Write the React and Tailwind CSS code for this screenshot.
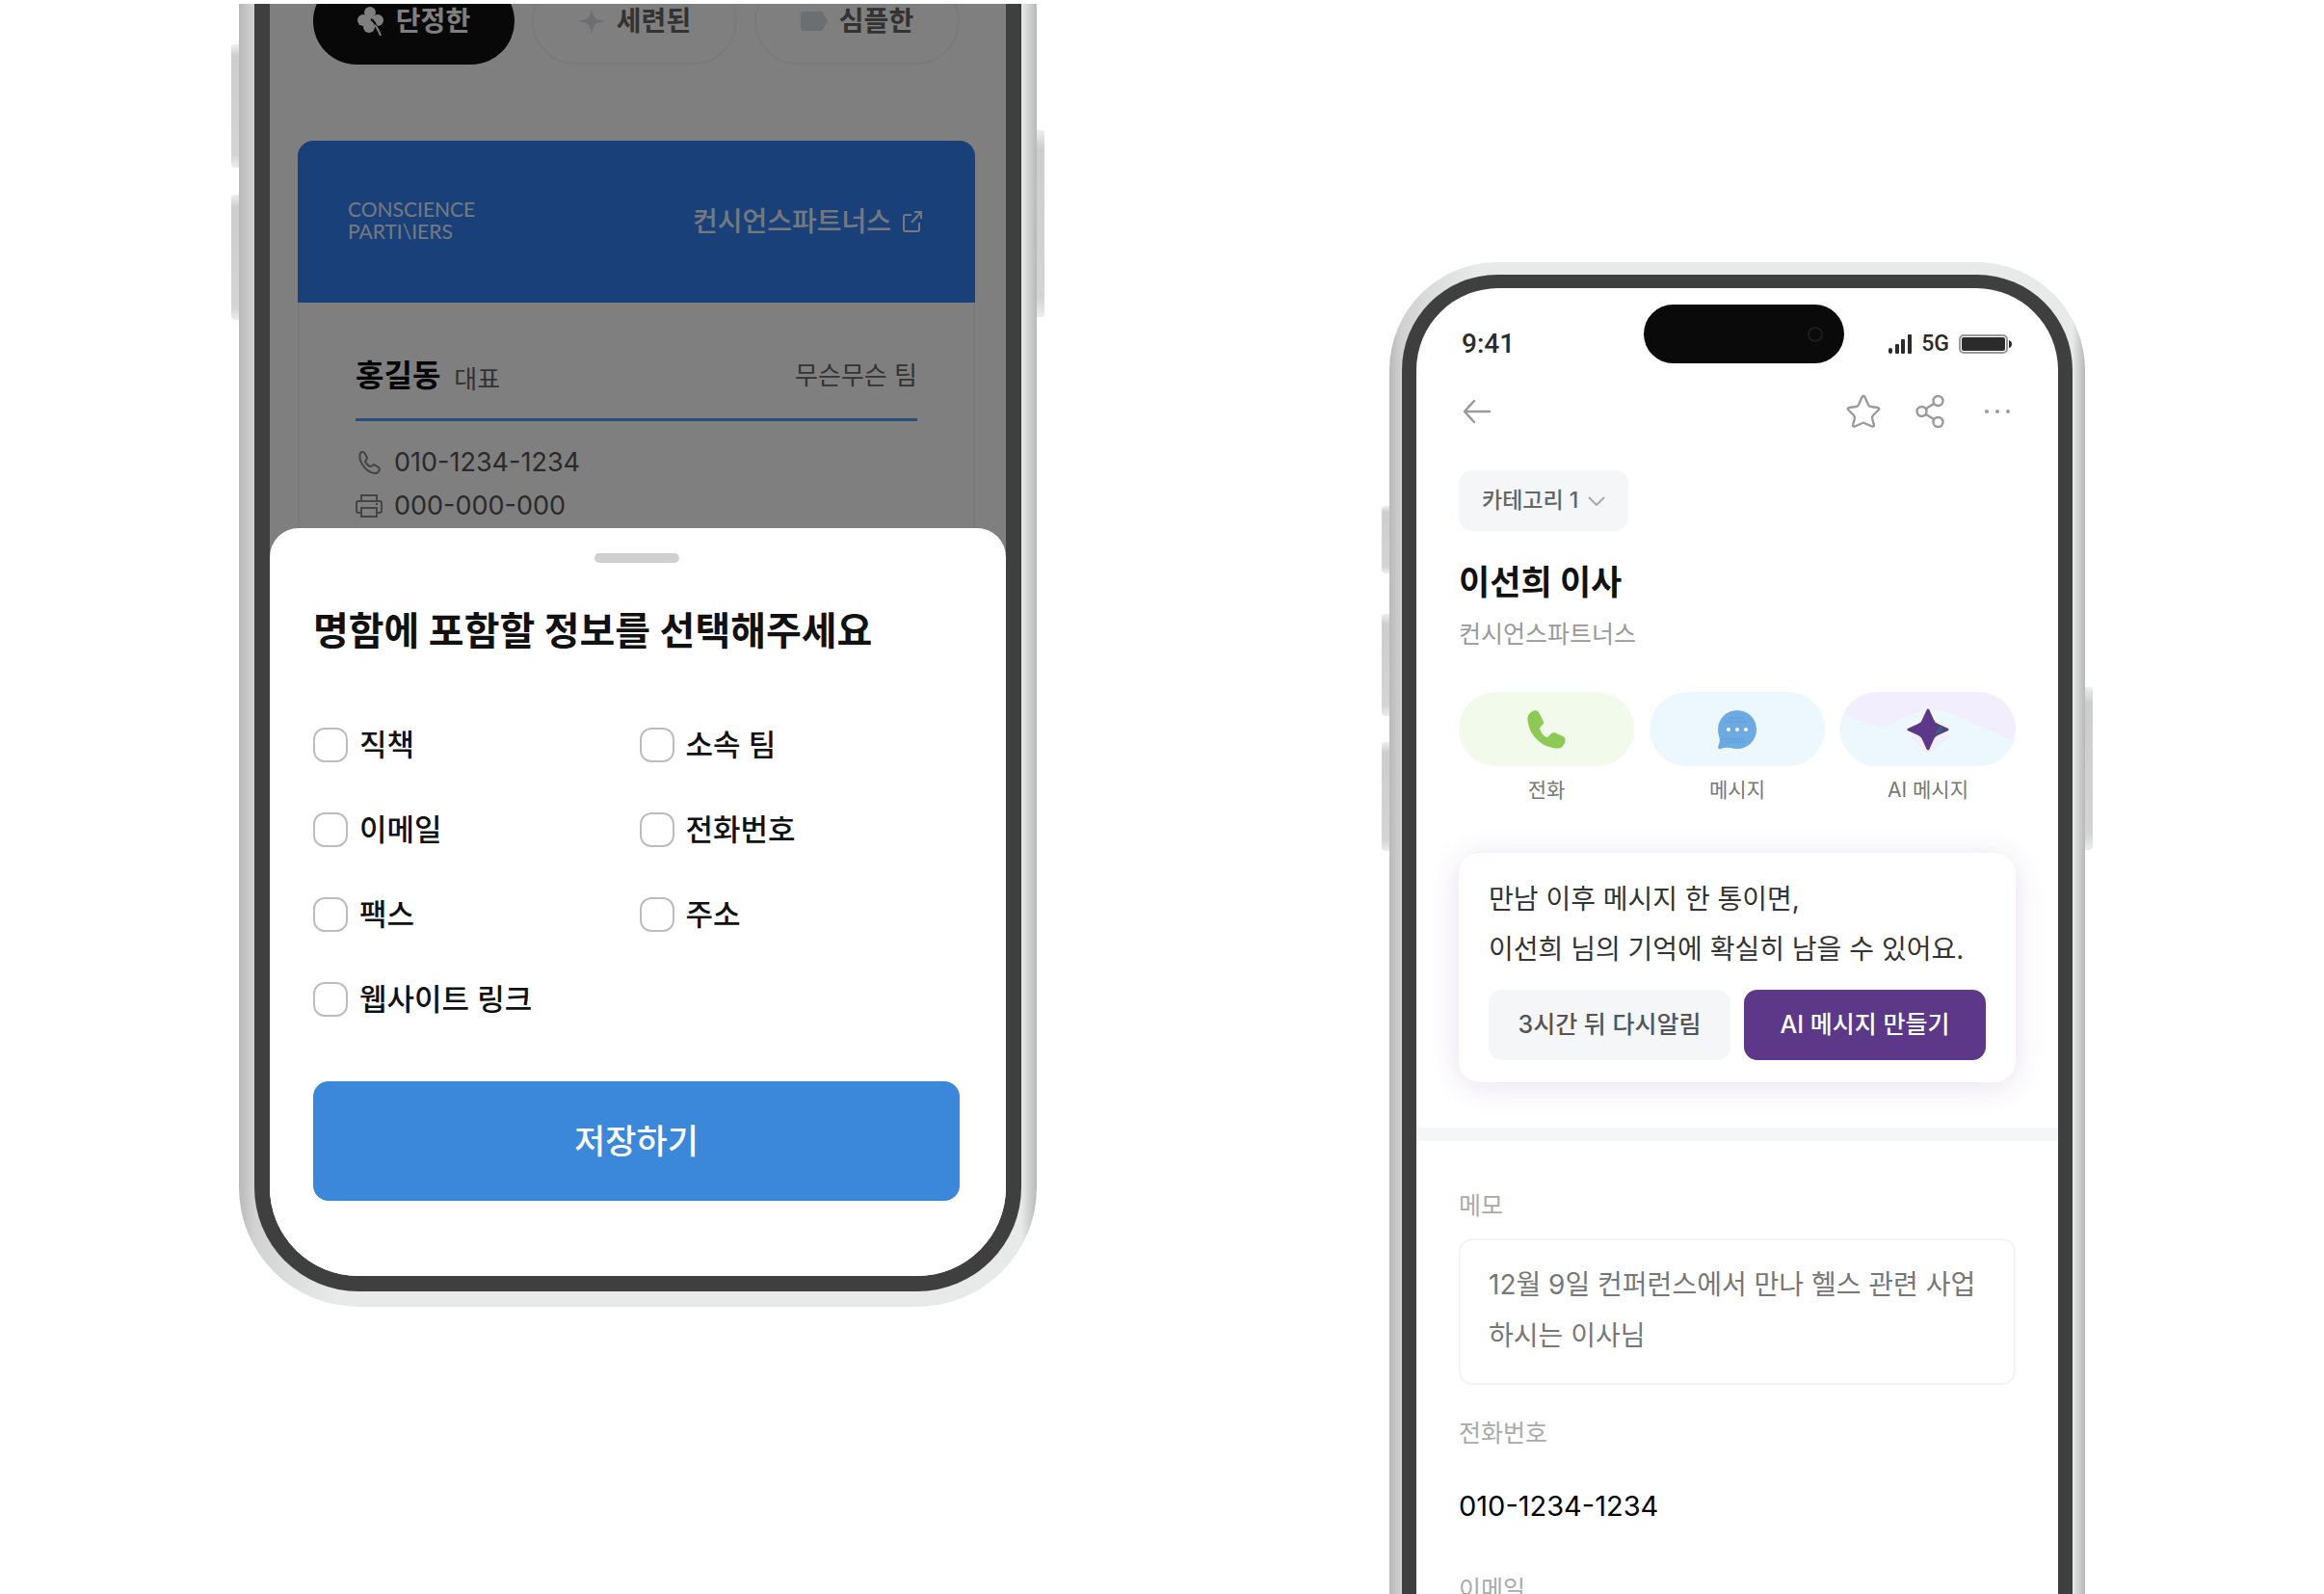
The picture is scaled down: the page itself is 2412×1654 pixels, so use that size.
import React from 'react';

const chips = [
    { label: '단정한', active: true },
    { label: '세련된', active: false },
    { label: '심플한', active: false },
];

const fields = ['직책', '소속 팀', '이메일', '전화번호', '팩스', '주소', '웹사이트 링크'];

const ChipIcon = ({ index }) => {
    if (index === 0) {
        return (
            <svg viewBox="0 0 28 30" className="w-7 h-[30px]" fill="currentColor">
                <circle cx="13" cy="6" r="6" />
                <circle cx="6" cy="14" r="6" />
                <circle cx="21" cy="14" r="6" />
                <circle cx="12" cy="21" r="6" />
                <path d="M8 10 H18 V19 H8 Z" />
                <path d="M14 13 C18 15 20 20 22 25" stroke="#111" strokeWidth="2" fill="none" />
                <path d="M18 19 C21 22 22 25 24 30" stroke="currentColor" strokeWidth="2" fill="none" />
            </svg>
        );
    }
    if (index === 1) {
        return (
            <svg viewBox="0 0 28 28" className="w-7 h-7 text-[#d9dfe5]" fill="currentColor">
                <path d="M14 0 C15 7 17 11 20 12 L28 14 L20 16 C17 17 15 21 14 28 C13 21 11 17 8 16 L0 14 L8 12 C11 11 13 7 14 0 Z" />
            </svg>
        );
    }
    return (
        <svg viewBox="0 0 28 28" className="w-7 h-7 text-[#d9dfe5]" fill="currentColor">
            <path d="M3 4 H20 C22 4 23 5 24 7 L28 14 L24 21 C23 23 22 24 20 24 H3 C1 24 0 23 0 21 V7 C0 5 1 4 3 4 Z" />
        </svg>
    );
};

const SideKey = ({ className }) => (
    <div className={`absolute bg-[linear-gradient(to_bottom,#eceeee,#cdcdcd_10%,#d4d4d4_90%,#eceeee)] ${className}`}></div>
);

const CardPhone = () => (
    <div className="relative w-[828px] shrink-0 pt-1">
        <SideKey className="-left-[8px] top-[46px] w-[12px] h-[128px] rounded-l" />
        <SideKey className="-left-[8px] top-[202px] w-[12px] h-[130px] rounded-l" />
        <SideKey className="-right-[8px] top-[135px] w-[12px] h-[194px] rounded-r" />
        <div className="relative px-4 pb-4 rounded-b-[124px] bg-[linear-gradient(to_right,#b9b9b9,#d2d2d2_16px,#e8eaea_100px,#e8eaea_calc(100%-16px),#b8b8b8)]">
            <div className="px-4 pb-4 rounded-b-[108px] bg-[#3f3f3f]">
                <div className="rounded-b-[92px] bg-white overflow-hidden">
                    <div className="relative h-[574px] overflow-hidden">
                        <div className="flex items-end gap-[18px] h-[63px] overflow-hidden pl-[45px] pr-12">
                            {chips.map((chip, i) => (
                                <button
                                    key={chip.label}
                                    type="button"
                                    className={chip.active
                                        ? 'flex-1 h-[90px] flex items-center justify-center gap-3 rounded-full bg-[#111] text-white text-[28px] font-bold shrink-0'
                                        : 'flex-1 h-[90px] flex items-center justify-center gap-3 rounded-full border-2 border-[#f2f4f5] text-[#666] text-[28px] font-bold shrink-0'}
                                >
                                    <ChipIcon index={i} />
                                    {chip.label}
                                </button>
                            ))}
                        </div>
                        <div className="mt-[79px] ml-[29px] mr-8 h-[600px] rounded-t-[16px] border-2 border-t-0 border-[#f6f6f6]">
                            <div className="-mx-[2px] h-[168px] pl-[52px] pr-[55px] flex items-center justify-between rounded-t-[16px] bg-[#3480f4] text-white/90">
                                <p className="pb-1 font-['Lato'] text-[21px] leading-[23px]">
                                    CONSCIENCE<br />PARTI\IERS
                                </p>
                                <a href="#company" className="flex items-center gap-3 text-[28px] font-medium">
                                    컨시언스파트너스
                                    <svg viewBox="0 0 20 22" className="w-5 h-[22px]" fill="none" stroke="currentColor" strokeWidth="2">
                                        <path d="M9 4 H3 Q1 4 1 6 V19 Q1 21 3 21 H15 Q17 21 17 19 V12 M12 1 H19 V8 M19 1 L9 12" />
                                    </svg>
                                </a>
                            </div>
                            <div className="mx-[58px] pt-12">
                                <div className="h-[75px] pt-1 flex items-start justify-between border-b-[3px] border-[#5399f9]">
                                    <p className="flex items-end gap-[14px]">
                                        <strong className="text-[32px] leading-[48px] font-bold text-black">홍길동</strong>
                                        <span className="text-[26px] leading-10 text-[#666]">대표</span>
                                    </p>
                                    <span className="text-[26px] leading-[48px] text-[#666]">무슨무슨 팀</span>
                                </div>
                                <ul className="pt-5 text-[27px] leading-[45px] text-[#555]">
                                    <li className="flex items-center gap-3">
                                        <svg viewBox="0 0 28 24" className="w-7 h-6 text-[#888]" fill="none" stroke="currentColor" strokeWidth="2">
                                            <path d="M5 2 C7 0 9 1 10 3 L12 7 C12 9 10 10 10 11 C11 13 13 15 15 16 C18 16 18 14 19 14 L24 17 C26 19 24 22 22 23 C13 24 2 12 5 2 Z" />
                                        </svg>
                                        010-1234-1234
                                    </li>
                                    <li className="flex items-center gap-3">
                                        <svg viewBox="0 0 28 24" className="w-7 h-6 text-[#888]" fill="none" stroke="currentColor" strokeWidth="2">
                                            <path d="M6 7 V1 H22 V7 M6 19 H3 Q1 19 1 17 V9 Q1 7 3 7 H25 Q27 7 27 9 V17 Q27 19 25 19 H22 M6 14 H22 V23 H6 Z M21 10 H23" />
                                        </svg>
                                        000-000-000
                                    </li>
                                </ul>
                            </div>
                        </div>
                        <div className="absolute inset-0 bg-black/50"></div>
                    </div>

                    <form className="relative -mt-[30px] rounded-t-[30px] bg-white pl-[45px] pr-12 pt-[26px] pb-[78px]">
                        <div className="mx-auto w-[88px] h-[10px] rounded-full bg-[#d0d0d0]"></div>
                        <h2 className="mt-[46px] text-[40px] leading-[50px] font-bold text-[#111]">명함에 포함할 정보를 선택해주세요</h2>
                        <div className="mt-[75px] grid grid-cols-2 gap-x-[6px] gap-y-[52px]">
                            {fields.map((field) => (
                                <label key={field} className="flex items-center gap-3 text-[31px] leading-9 font-medium text-[#111]">
                                    <input type="checkbox" className="appearance-none w-9 h-9 rounded-[12px] border-2 border-[#bdbdbd] bg-white checked:bg-[#3b88da]" />
                                    {field}
                                </label>
                            ))}
                        </div>
                        <button type="button" className="mt-[67px] w-full h-[124px] rounded-[16px] bg-[#3b88da] text-white text-[35px] font-medium">
                            저장하기
                        </button>
                    </form>
                </div>
            </div>
        </div>
    </div>
);

const ContactPhone = () => (
    <div className="relative w-[722px] shrink-0 mt-[272px]">
        <SideKey className="-left-[8px] top-[253px] w-[12px] h-[70px] rounded-l" />
        <SideKey className="-left-[8px] top-[365px] w-[12px] h-[106px] rounded-l" />
        <SideKey className="-left-[8px] top-[498px] w-[12px] h-[113px] rounded-l" />
        <SideKey className="-right-[8px] top-[441px] w-[12px] h-[169px] rounded-r" />
        <div className="relative px-[13px] pt-[13px] rounded-t-[112px] bg-[linear-gradient(to_right,#b9b9b9,#d2d2d2_13px,#e8eaea_90px,#e8eaea_calc(100%-13px),#b8b8b8)]">
            <div className="px-[15px] pt-[14px] rounded-t-[99px] bg-[#3f3f3f]">
                <div className="rounded-t-[85px] bg-white overflow-hidden pb-40">
                    <div className="px-11">
                        <div className="relative pt-[38px] flex items-center justify-between text-[#2b2b2b] font-medium font-['Roboto']">
                            <span className="pl-[3px] text-[28px] leading-10">9:41</span>
                            <div className="absolute left-1/2 top-[17px] -ml-[97px] w-[208px] h-[61px] rounded-full bg-[#0a0a0a] flex items-center justify-end pr-[22px]">
                                <span className="w-4 h-4 rounded-full border-2 border-[#1c1c1c]"></span>
                            </div>
                            <div className="flex items-center gap-[10px] pr-1 text-[23px]">
                                <svg viewBox="0 0 24 20" className="w-6 h-5" fill="currentColor">
                                    <rect x="0" y="14" width="4" height="6" rx="2" />
                                    <rect x="7" y="10" width="4" height="10" rx="1" />
                                    <rect x="13" y="5" width="4" height="15" rx="1" />
                                    <rect x="20" y="0" width="4" height="20" rx="1" />
                                </svg>
                                5G
                                <svg viewBox="0 0 55 20" className="w-[55px] h-5">
                                    <rect x="1" y="1" width="49" height="18" rx="4" fill="none" stroke="#999" strokeWidth="2" />
                                    <rect x="3" y="3" width="45" height="14" rx="2" fill="currentColor" />
                                    <path d="M52 6 Q55 7 55 10 Q55 13 52 14 Z" fill="currentColor" />
                                </svg>
                            </div>
                        </div>

                        <nav className="mt-8 flex items-center text-[#9a9a9a]">
                            <button type="button" aria-label="뒤로" className="pl-1 mr-auto">
                                <svg viewBox="0 0 30 26" className="w-[30px] h-[26px]" fill="none" stroke="currentColor" strokeWidth="2.4" strokeLinecap="round" strokeLinejoin="round">
                                    <path d="M28 13 H2 M12 2 L2 13 L12 24" />
                                </svg>
                            </button>
                            <button type="button" aria-label="즐겨찾기" className="mr-9">
                                <svg viewBox="0 0 36 36" className="w-9 h-9" fill="none" stroke="currentColor" strokeWidth="2.4" strokeLinejoin="round">
                                    <path d="M16.500 3 Q18 1 19.500 3 L23 11 Q24 13 26 13 L33 14 Q35 15 34 16 L28 22 Q27 23 27 25 L29 32 Q29 34 27 33.500 L19 30 Q18 29.500 17 30 L9 33.500 Q7 34 7 32 L9 25 Q9 23 8 22 L2 16 Q1 15 3 14 L10 13 Q12 13 13 11 Z" />
                                </svg>
                            </button>
                            <button type="button" aria-label="공유" className="mr-[42px]">
                                <svg viewBox="0 0 30 36" className="w-[30px] h-9" fill="none" stroke="currentColor" strokeWidth="2.4">
                                    <circle cx="6.500" cy="18" r="5" />
                                    <circle cx="23.500" cy="7" r="5" />
                                    <circle cx="23.500" cy="29" r="5" />
                                    <path d="M11 15 L19 10 M11 21 L19 26" />
                                </svg>
                            </button>
                            <button type="button" aria-label="더보기" className="pr-[6px]">
                                <svg viewBox="0 0 26 4" className="w-[26px] h-1" fill="currentColor">
                                    <circle cx="2" cy="2" r="2" />
                                    <circle cx="13" cy="2" r="2" />
                                    <circle cx="24" cy="2" r="2" />
                                </svg>
                            </button>
                        </nav>

                        <button type="button" className="mt-[43px] h-[63px] px-6 flex items-center gap-[10px] rounded-[14px] bg-[#f4f6f7] text-[23px] font-medium text-[#666]">
                            카테고리 1
                            <svg viewBox="0 0 18 10" className="w-[18px] h-[10px]" fill="none" stroke="#aaa" strokeWidth="2">
                                <path d="M1 1 L9 9 L17 1" />
                            </svg>
                        </button>
                        <h1 className="mt-[29px] text-[35px] leading-[48px] font-bold text-[#111]">이선희 이사</h1>
                        <p className="mt-3 text-[25px] leading-9 text-[#9a9a9a]">컨시언스파트너스</p>

                        <div className="mt-[42px] grid grid-cols-3 gap-4 text-[21px] text-[#777]">
                            <button type="button">
                                <span className="h-[77px] flex items-center justify-center rounded-full bg-[#f2fbeb]">
                                    <svg viewBox="0 0 40 40" className="w-10 h-10" fill="#8cc955">
                                        <path d="M2 4 C5 0 10 -1 12 2 L17 12 C18 15 13 16 13 19 C14 23 17 27 20 28 C23 28 24 23 28 23 L37 27 C41 29 40 33 37 37 C35 40 31 40 27 39 C14 37 3 26 1 13 C0 9 0 7 2 4 Z" />
                                    </svg>
                                </span>
                                <span className="block mt-2 leading-[34px]">전화</span>
                            </button>
                            <button type="button">
                                <span className="h-[77px] flex items-center justify-center rounded-full bg-[#ecf8fe]">
                                    <svg viewBox="0 0 42 42" className="w-[42px] h-[42px]">
                                        <circle cx="21" cy="21" r="20" fill="#6eaae2" />
                                        <path d="M2 26 Q4 33 1 39 Q1 42 4 41 Q9 39 14 40 L20 30 Z" fill="#6eaae2" />
                                        <path d="M13 9 H28 M8 13 H32 M7 31 H28 M10 34 H30" fill="none" stroke="#4a92de" strokeWidth="1" strokeDasharray="1 1" />
                                        <circle cx="12" cy="21" r="2" fill="#fff" />
                                        <circle cx="21" cy="21" r="2" fill="#fff" />
                                        <circle cx="30" cy="21" r="2" fill="#fff" />
                                    </svg>
                                </span>
                                <span className="block mt-2 leading-[34px]">메시지</span>
                            </button>
                            <button type="button">
                                <span className="relative h-[77px] flex items-center justify-center rounded-full bg-[#f3eefd] overflow-hidden">
                                    <svg viewBox="0 0 182 77" preserveAspectRatio="none" className="absolute inset-0 w-full h-full">
                                        <path d="M0 21 L34 34 Q44 38 54 33 L74 23 Q90 16 112 21 L182 52 V77 H0 Z" fill="#ecf8fe" />
                                        <path d="M72 46 L86 60 Q92 66 98 60 L116 44 Z" fill="#f3eefd" />
                                    </svg>
                                    <svg viewBox="0 0 44 44" className="relative w-11 h-11">
                                        <path d="M22 2 L27 13 Q28 16 31 17 L42 22 L31 27 Q28 28 27 31 L22 42 L17 31 Q16 28 13 27 L2 22 L13 17 Q16 16 17 13 Z" fill="#5d3788" stroke="#5d3788" strokeWidth="3" strokeLinejoin="round" />
                                        <path d="M28 28 L34 18 L38 20 L36 25 Z" fill="#3f5a7c" />
                                    </svg>
                                </span>
                                <span className="block mt-2 leading-[34px]">AI 메시지</span>
                            </button>
                        </div>

                        <section className="mt-12 px-[31px] pt-[22px] pb-[23px] rounded-[22px] bg-white shadow-[0_4px_32px_#5d378826]">
                            <p className="text-[28px] leading-[52px] text-[#333]">
                                만남 이후 메시지 한 통이면,<br />이선희 님의 기억에 확실히 남을 수 있어요.
                            </p>
                            <div className="mt-4 grid grid-cols-2 gap-[14px] text-[25px] font-medium">
                                <button type="button" className="h-[73px] rounded-[14px] bg-[#f4f6f7] text-[#555]">3시간 뒤 다시알림</button>
                                <button type="button" className="h-[73px] rounded-[14px] bg-[#5d3788] text-white">AI 메시지 만들기</button>
                            </div>
                        </section>
                    </div>

                    <hr className="mt-[47px] h-[14px] border-0 bg-[#f4f6f7]" />

                    <div className="px-11 pt-[49px]">
                        <label htmlFor="memo" className="block text-[25px] leading-9 text-[#aaa]">메모</label>
                        <textarea
                            id="memo"
                            rows={2}
                            className="block mt-4 w-full h-[152px] px-[29px] py-[20px] rounded-[14px] border-2 border-[#f2f4f5] resize-none overflow-hidden text-[28px] leading-[53px] text-[#777]"
                            defaultValue="12월 9일 컨퍼런스에서 만나 헬스 관련 사업 하시는 이사님"
                        />
                        <dl>
                            <dt className="mt-8 text-[25px] leading-9 text-[#aaa]">전화번호</dt>
                            <dd className="mt-9 text-[29px] leading-[44px] text-black">010-1234-1234</dd>
                            <dt className="mt-[46px] text-[25px] leading-9 text-[#aaa]">이메일</dt>
                        </dl>
                    </div>
                </div>
            </div>
        </div>
    </div>
);

const App = () => {
    return (
        <div className="h-screen overflow-hidden bg-white flex items-start justify-center gap-[366px] font-['Inter','Noto_Sans_CJK_KR',sans-serif]">
            <CardPhone />
            <ContactPhone />
        </div>
    );
};

export default App;
